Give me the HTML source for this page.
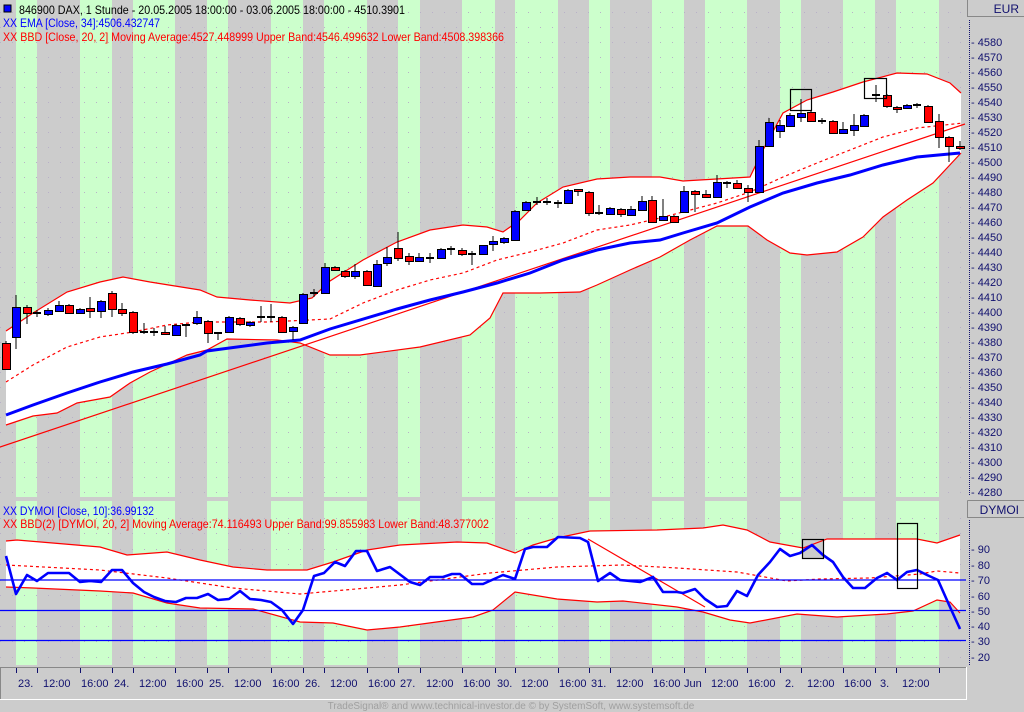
<!DOCTYPE html>
<html><head><meta charset="utf-8"><style>
html,body{margin:0;padding:0;background:#cccccc;}
svg{display:block;font-family:"Liberation Sans",Arial,sans-serif;}
</style></head><body>
<svg width="1024" height="712" viewBox="0 0 1024 712" xmlns="http://www.w3.org/2000/svg">
<rect x="0" y="0" width="1024" height="712" fill="#cccccc"/>
<!-- green stripes -->
<g fill="#ccffcc">
<rect x="16" y="0" width="21" height="665"/><rect x="80" y="0" width="32" height="665"/><rect x="133" y="0" width="42" height="665"/>
<rect x="207" y="0" width="21" height="665"/><rect x="271" y="0" width="32" height="665"/><rect x="324" y="0" width="43" height="665"/>
<rect x="398" y="0" width="22" height="665"/><rect x="462" y="0" width="33" height="665"/><rect x="515" y="0" width="43" height="665"/>
<rect x="589" y="0" width="21" height="665"/><rect x="652" y="0" width="32" height="665"/><rect x="705" y="0" width="42" height="665"/>
<rect x="780" y="0" width="21" height="665"/><rect x="843" y="0" width="32" height="665"/><rect x="896" y="0" width="43" height="665"/>
</g>
<rect x="0" y="497" width="966" height="4" fill="#cccccc"/>
<!-- dotted grid -->
<g stroke="#b8b0c8" stroke-width="1" stroke-dasharray="1 11">
<path d="M0 12.5H966M0 27.5H966M0 42.5H966M0 57.5H966M0 72.5H966M0 87.5H966M0 102.5H966M0 117.5H966M0 132.5H966M0 147.5H966M0 162.5H966M0 177.5H966M0 192.5H966M0 207.5H966M0 222.5H966M0 237.5H966M0 252.5H966M0 267.5H966M0 282.5H966M0 297.5H966M0 312.5H966M0 327.5H966M0 342.5H966M0 357.5H966M0 372.5H966M0 387.5H966M0 402.5H966M0 417.5H966M0 432.5H966M0 447.5H966M0 462.5H966M0 477.5H966M0 492.5H966M0 518.5H966M0 533.5H966M0 549.5H966M0 564.5H966M0 580.5H966M0 595.5H966M0 610.5H966M0 626.5H966M0 641.5H966M0 657.5H966"/>
</g>
<!-- main band fill -->
<polygon fill="#ffffff" points="6,331 33,313 67,292 100,282 123,277 150,282 200,290 217,297 250,300 290,303 312,298 330,281 363,260 397,242 430,230 463,225 487,227 503,232 520,220 537,203 563,187 597,179 630,177 660,177 683,181 750,177 763,150 783,113 807,100 833,92 863,82 897,73 927,74 950,83 961,93 961,153 933,183 907,200 883,217 863,237 837,252 807,255 790,253 767,240 748,226 717,226 690,240 660,257 630,270 597,285 580,292 540,293 503,293 490,318 470,335 420,347 360,355 330,355 300,343 277,340 227,339 207,350 187,355 150,372 130,383 110,397 77,403 57,413 33,416 6,425"/>
<g fill="none" stroke="#ff0000" stroke-width="1.2">
<polyline points="6,331 33,313 67,292 100,282 123,277 150,282 200,290 217,297 250,300 290,303 312,298 330,281 363,260 397,242 430,230 463,225 487,227 503,232 520,220 537,203 563,187 597,179 630,177 660,177 683,181 750,177 763,150 783,113 807,100 833,92 863,82 897,73 927,74 950,83 961,93"/>
<polyline points="6,425 33,416 57,413 77,403 110,397 130,383 150,372 187,355 207,350 227,339 277,340 300,343 330,355 360,355 420,347 470,335 490,318 503,293 540,293 580,292 597,285 630,270 660,257 690,240 717,226 748,226 767,240 790,253 807,255 837,252 863,237 883,217 907,200 933,183 961,153"/>
<polyline stroke-dasharray="3 3" points="6,382 33,365 67,347 100,337 133,332 167,325 200,322 267,322 330,319 363,303 397,290 430,280 463,273 497,260 530,252 563,243 597,230 630,225 660,218 717,203 750,192 783,177 817,163 850,150 883,137 917,128 963,123"/>
<line x1="0" y1="447" x2="965" y2="124"/>
</g>
<polyline fill="none" stroke="#0000ff" stroke-width="3" points="6,415 33,405 67,393 100,382 133,372 167,364 200,355 207,351 267,343 300,340 330,329 397,309 430,300 463,292 497,283 530,273 563,260 597,250 630,243 660,240 683,233 717,223 750,207 783,193 817,183 850,175 883,165 917,157 960,153"/>
<!-- candles -->
<g stroke="#000" stroke-width="1">
<path d="M6 341V370M16 295V349M27 305V324M37 310V317M48 308V316M59 301V312M69 304V314M80 308V314M90 297V318M101 300V318M112 291V317M122 303V316M133 311V334M144 323V334M154 328V336M165 326V335M176 324V336M186 324V337M197 311V325M208 320V343M218 332V340M229 316V333M240 317V326M250 321V327M261 306V322M271 304V322M282 316V333M293 326V340M303 293V324M314 289V297M325 263V294M335 266V271M345 270V278M355 264V279M367 270V286M377 260V287M387 247V266M398 232V261M409 253V265M419 253V262M430 253V263M441 248V259M451 246V255M462 248V256M472 251V265M483 245V255M493 236V251M504 237V244M515 210V241M526 201V211M537 197V205M547 198V205M558 200V208M568 189V204M578 189V196M589 191V216M599 205V215M610 207V215M621 208V217M631 206V216M642 196V211M652 196V223M663 199V221M674 215V223M684 186V213M695 190V212M706 190V198M717 175V198M727 181V188M737 180V189M748 185V202M759 140V193M769 118V147M780 120V138M790 113V127M801 99V122M811 111V122M822 118V124M833 120V134M843 122V134M854 114V136M864 114V127M876 85V102M887 94V108M897 106V113M907 104V109M917 103V108M928 105V123M939 114V148M949 136V162M960 141V150"/>
<path stroke-width="2" d="M33 313H41M140 332H148M150 332H158M182 325H190M214 333H222M257 317H265M267 317H275M310 293H318M426 258H434M447 249H455M468 254H476M533 202H541M543 202H551M554 203H562M595 213H603M723 183H731M818 121H826M872 95H880M913 105H921"/>
</g>
<g stroke="#000" stroke-width="1" fill="#ff0000">
<rect x="2.5" y="343.5" width="8" height="26"/><rect x="23.5" y="307.5" width="8" height="6"/><rect x="65.5" y="305.5" width="8" height="8"/><rect x="86.5" y="308.5" width="8" height="3"/><rect x="108.5" y="293.5" width="8" height="16"/><rect x="118.5" y="309.5" width="8" height="4"/><rect x="129.5" y="312.5" width="8" height="20"/><rect x="161.5" y="332.5" width="8" height="2"/><rect x="204.5" y="321.5" width="8" height="12"/><rect x="236.5" y="318.5" width="8" height="6"/><rect x="278.5" y="317.5" width="8" height="15"/><rect x="331.5" y="267.5" width="8" height="3"/><rect x="341.5" y="271.5" width="8" height="5"/><rect x="363.5" y="271.5" width="8" height="14"/><rect x="394.5" y="248.5" width="8" height="10"/><rect x="405.5" y="256.5" width="8" height="5"/><rect x="458.5" y="250.5" width="8" height="4"/><rect x="574.5" y="189.5" width="8" height="2"/><rect x="585.5" y="192.5" width="8" height="21"/><rect x="617.5" y="209.5" width="8" height="5"/><rect x="648.5" y="200.5" width="8" height="22"/><rect x="670.5" y="216.5" width="8" height="6"/><rect x="691.5" y="191.5" width="8" height="3"/><rect x="702.5" y="194.5" width="8" height="3"/><rect x="733.5" y="183.5" width="8" height="5"/><rect x="744.5" y="188.5" width="8" height="4"/><rect x="807.5" y="112.5" width="8" height="9"/><rect x="829.5" y="121.5" width="8" height="12"/><rect x="883.5" y="95.5" width="8" height="11"/><rect x="893.5" y="107.5" width="8" height="2"/><rect x="924.5" y="106.5" width="8" height="16"/><rect x="935.5" y="121.5" width="8" height="16"/><rect x="945.5" y="137.5" width="8" height="9"/><rect x="956.5" y="146.5" width="8" height="2"/>
</g>
<g stroke="#000" stroke-width="1" fill="#0000ff">
<rect x="12.5" y="307.5" width="8" height="30"/><rect x="44.5" y="310.5" width="8" height="4"/><rect x="55.5" y="305.5" width="8" height="6"/><rect x="76.5" y="309.5" width="8" height="4"/><rect x="97.5" y="301.5" width="8" height="10"/><rect x="172.5" y="325.5" width="8" height="10"/><rect x="193.5" y="317.5" width="8" height="6"/><rect x="225.5" y="317.5" width="8" height="15"/><rect x="246.5" y="322.5" width="8" height="3"/><rect x="289.5" y="327.5" width="8" height="4"/><rect x="299.5" y="294.5" width="8" height="29"/><rect x="321.5" y="267.5" width="8" height="26"/><rect x="351.5" y="271.5" width="8" height="5"/><rect x="373.5" y="264.5" width="8" height="22"/><rect x="383.5" y="257.5" width="8" height="6"/><rect x="415.5" y="257.5" width="8" height="4"/><rect x="437.5" y="249.5" width="8" height="9"/><rect x="479.5" y="245.5" width="8" height="9"/><rect x="489.5" y="241.5" width="8" height="3"/><rect x="500.5" y="238.5" width="8" height="4"/><rect x="511.5" y="211.5" width="8" height="29"/><rect x="522.5" y="202.5" width="8" height="8"/><rect x="564.5" y="190.5" width="8" height="13"/><rect x="606.5" y="208.5" width="8" height="6"/><rect x="627.5" y="209.5" width="8" height="6"/><rect x="638.5" y="201.5" width="8" height="9"/><rect x="659.5" y="216.5" width="8" height="4"/><rect x="680.5" y="191.5" width="8" height="21"/><rect x="713.5" y="182.5" width="8" height="15"/><rect x="755.5" y="146.5" width="8" height="46"/><rect x="765.5" y="122.5" width="8" height="24"/><rect x="776.5" y="125.5" width="8" height="6"/><rect x="786.5" y="115.5" width="8" height="11"/><rect x="797.5" y="113.5" width="8" height="4"/><rect x="839.5" y="129.5" width="8" height="4"/><rect x="850.5" y="125.5" width="8" height="5"/><rect x="860.5" y="115.5" width="8" height="11"/><rect x="903.5" y="105.5" width="8" height="3"/>
</g>
<g fill="none" stroke="#000" stroke-width="1.2">
<rect x="790.5" y="89.5" width="21" height="21"/><rect x="864.5" y="78.5" width="22" height="20"/>
</g>
<!-- lower panel -->
<polygon fill="#ffffff" points="6,541 17,540 100,547 127,555 167,552 200,560 233,567 267,570 307,570 333,562 367,550 400,545 457,542 487,543 515,553 533,545 557,538 590,531 657,530 703,528 723,525 747,530 770,542 803,548 827,539 917,539 937,543 960,535 960,613 950,602 937,600 913,611 887,614 837,617 797,614 750,623 730,620 703,612 677,607 623,601 597,602 557,599 515,592 493,610 473,617 400,627 367,630 333,623 300,622 253,609 200,608 167,603 133,593 100,591 33,588 6,587"/>
<rect x="802" y="539" width="21" height="19" fill="#cccccc"/>
<g fill="none" stroke="#ff0000" stroke-width="1.2">
<polyline points="6,541 17,540 100,547 127,555 167,552 200,560 233,567 267,570 307,570 333,562 367,550 400,545 457,542 487,543 515,553 533,545 557,538 590,531 657,530 703,528 723,525 747,530 770,542 803,548 827,539 917,539 937,543 960,535"/>
<polyline points="6,587 33,588 100,591 133,593 167,603 200,608 253,609 300,622 333,623 367,630 400,627 473,617 493,610 515,592 557,599 597,602 623,601 677,607 703,612 730,620 750,623 797,614 837,617 887,614 913,611 937,600 950,602 960,613"/>
<polyline stroke-dasharray="3 3" points="6,565 100,570 167,578 233,588 300,594 367,588 400,585 490,573 557,567 623,565 677,568 737,572 787,581 820,579 870,578 920,574 937,571 960,573"/>
<line x1="588" y1="539" x2="705" y2="607"/>
</g>
<g stroke="#0000ff" stroke-width="1.3"><line x1="0" y1="580" x2="966" y2="580"/><line x1="0" y1="610.5" x2="966" y2="610.5"/><line x1="0" y1="640.5" x2="966" y2="640.5"/></g>
<polyline fill="none" stroke="#0000ff" stroke-width="2.6" stroke-linejoin="round" points="6,556 16,594 27,575 37,581 48,573 59,573 69,573 80,582 90,581 101,582 112,570 122,570 133,583 144,592 154,597 165,601 176,602 186,598 197,598 208,594 218,600 229,599 240,591 250,599 261,600 271,602 282,610 293,624 303,610 314,576 324,573 335,562 345,566 356,551 367,551 377,571 390,567 410,582 420,585 430,577 443,577 452,574 460,574 472,584 483,584 503,575 515,579 525,549 533,547 547,547 558,537 580,538 588,542 598,581 610,573 620,580 640,582 653,577 663,592 677,592 683,593 695,589 705,599 717,607 727,606 737,591 747,596 758,575 770,562 780,549 790,556 800,553 812,545 823,555 833,562 843,577 853,588 865,588 877,578 887,573 897,580 907,572 917,570 927,575 938,580 950,607 960,629"/>
<g fill="none" stroke="#000" stroke-width="1.2"><rect x="802.5" y="539.5" width="21" height="19"/><rect x="897.5" y="523.5" width="20" height="65"/></g>
<!-- titles -->
<rect x="4" y="5" width="7" height="7" fill="#0000ff" stroke="#000" stroke-width="1"/>
<g font-size="12">
<text x="19" y="14" fill="#000" textLength="386" lengthAdjust="spacingAndGlyphs">846900  DAX, 1 Stunde - 20.05.2005 18:00:00 - 03.06.2005 18:00:00 - 4510.3901</text>
<text x="3" y="27" fill="#0000ff" textLength="157" lengthAdjust="spacingAndGlyphs">XX EMA [Close, 34]:4506.432747</text>
<text x="3" y="41" fill="#ff0000" textLength="501" lengthAdjust="spacingAndGlyphs">XX BBD [Close, 20, 2] Moving Average:4527.448999 Upper Band:4546.499632 Lower Band:4508.398366</text>
<text x="3" y="515" fill="#0000ff" textLength="151" lengthAdjust="spacingAndGlyphs">XX DYMOI [Close, 10]:36.99132</text>
<text x="3" y="528" fill="#ff0000" textLength="486" lengthAdjust="spacingAndGlyphs">XX BBD(2) [DYMOI, 20, 2] Moving Average:74.116493 Upper Band:99.855983 Lower Band:48.377002</text>
</g>
<!-- right axis -->
<rect x="966" y="0" width="58" height="712" fill="#cccccc"/>
<path d="M967.5 0V16.5H1024" fill="none" stroke="#888" stroke-width="1"/>
<path d="M967.5 500.5H1024M967.5 500.5V517.5H1024" fill="none" stroke="#888" stroke-width="1"/>
<text x="1019" y="13" font-size="12" fill="#10106e" text-anchor="end">EUR</text>
<text x="1019" y="514" font-size="12" fill="#10106e" text-anchor="end">DYMOI</text>
<g stroke="#10106e" stroke-width="1" stroke-dasharray="1 1"><line x1="969.5" y1="20" x2="969.5" y2="496"/><line x1="969.5" y1="520" x2="969.5" y2="665"/></g>
<g font-size="11" fill="#10106e">
<text x="971" y="46">- 4580</text><text x="971" y="61">- 4570</text><text x="971" y="76">- 4560</text><text x="971" y="91">- 4550</text><text x="971" y="106">- 4540</text><text x="971" y="121">- 4530</text><text x="971" y="136">- 4520</text><text x="971" y="151">- 4510</text><text x="971" y="166">- 4500</text><text x="971" y="181">- 4490</text><text x="971" y="196">- 4480</text><text x="971" y="211">- 4470</text><text x="971" y="226">- 4460</text><text x="971" y="241">- 4450</text><text x="971" y="256">- 4440</text><text x="971" y="271">- 4430</text><text x="971" y="286">- 4420</text><text x="971" y="301">- 4410</text><text x="971" y="316">- 4400</text><text x="971" y="331">- 4390</text><text x="971" y="346">- 4380</text><text x="971" y="361">- 4370</text><text x="971" y="376">- 4360</text><text x="971" y="391">- 4350</text><text x="971" y="406">- 4340</text><text x="971" y="421">- 4330</text><text x="971" y="436">- 4320</text><text x="971" y="451">- 4310</text><text x="971" y="466">- 4300</text><text x="971" y="481">- 4290</text><text x="971" y="496">- 4280</text>
<text x="971" y="553">- 90</text><text x="971" y="569">- 80</text><text x="971" y="584">- 70</text><text x="971" y="600">- 60</text><text x="971" y="615">- 50</text><text x="971" y="630">- 40</text><text x="971" y="645">- 30</text><text x="971" y="661">- 20</text>
</g>
<!-- x axis -->
<rect x="0" y="666" width="966" height="33" fill="#cccccc"/>
<path d="M0.5 699V667.5H966" fill="none" stroke="#888" stroke-width="1"/>
<path d="M0 699.5H966.5V667" fill="none" stroke="#fff" stroke-width="1"/>
<g stroke="#10106e" stroke-width="1"><path d="M16.5 668V673M37.5 668V673M80.5 668V673M112.5 668V673M133.5 668V673M175.5 668V673M207.5 668V673M228.5 668V673M271.5 668V673M303.5 668V673M324.5 668V673M367.5 668V673M398.5 668V673M420.5 668V673M462.5 668V673M495.5 668V673M515.5 668V673M558.5 668V673M589.5 668V673M610.5 668V673M652.5 668V673M684.5 668V673M705.5 668V673M747.5 668V673M780.5 668V673M801.5 668V673M843.5 668V673M875.5 668V673M896.5 668V673M939.5 668V673"/></g>
<g font-size="11" fill="#10106e">
<text x="18" y="687">23.</text><text x="43" y="687">12:00</text><text x="81" y="687">16:00</text><text x="114" y="687">24.</text><text x="139" y="687">12:00</text><text x="176" y="687">16:00</text><text x="209" y="687">25.</text><text x="234" y="687">12:00</text><text x="272" y="687">16:00</text><text x="305" y="687">26.</text><text x="330" y="687">12:00</text><text x="368" y="687">16:00</text><text x="400" y="687">27.</text><text x="426" y="687">12:00</text><text x="463" y="687">16:00</text><text x="497" y="687">30.</text><text x="521" y="687">12:00</text><text x="559" y="687">16:00</text><text x="591" y="687">31.</text><text x="616" y="687">12:00</text><text x="653" y="687">16:00</text><text x="684" y="687">Jun</text><text x="711" y="687">12:00</text><text x="748" y="687">16:00</text><text x="785" y="687">2.</text><text x="807" y="687">12:00</text><text x="844" y="687">16:00</text><text x="880" y="687">3.</text><text x="902" y="687">12:00</text>
</g>
<text x="511" y="709" font-size="10" fill="#a0a0a0" text-anchor="middle">TradeSignal® and www.technical-investor.de © by SystemSoft, www.systemsoft.de</text>
</svg>
</body></html>
